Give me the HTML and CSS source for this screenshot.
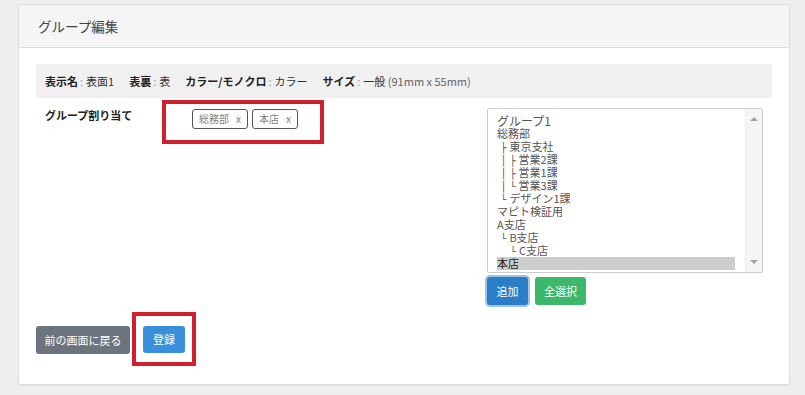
FILE: index.html
```html
<!DOCTYPE html>
<html lang="ja">
<head>
<meta charset="utf-8">
<title>グループ編集</title>
<link rel="stylesheet" href="styles.css">
</head>
<body>
<div class="card">
  <div class="card-header">グループ編集</div>
  <div class="card-body">
    <div class="info">
      <span class="item"><b>表示名</b><span class="sep">:</span>表面1</span>
      <span class="item"><b>表裏</b><span class="sep">:</span>表</span>
      <span class="item"><b>カラー/モノクロ</b><span class="sep">:</span>カラー</span>
      <span class="item"><b>サイズ</b><span class="sep">:</span>一般 <span class="dim">(91mm x 55mm)</span></span>
    </div>
    <div class="assign">
      <div class="label">グループ割り当て</div>
      <div class="mark tags">
        <span class="tag">総務部<span class="x">x</span></span>
        <span class="tag">本店<span class="x">x</span></span>
      </div>
      <div class="picker">
        <div class="listbox">
          <ul class="options">
            <li class="grp">グループ1</li>
            <li>総務部</li>
            <li><span class="bx"> ├ </span>東京支社</li>
            <li><span class="bx"> │ ├ </span>営業2課</li>
            <li><span class="bx"> │ ├ </span>営業1課</li>
            <li><span class="bx"> │ └ </span>営業3課</li>
            <li><span class="bx"> └ </span>デザイン1課</li>
            <li>マピト検証用</li>
            <li>A支店</li>
            <li><span class="bx"> └ </span>B支店</li>
            <li><span class="bx">    └ </span>C支店</li>
            <li class="sel">本店</li>
          </ul>
          <div class="scrollbar">
            <span class="arrow up"></span>
            <span class="arrow down"></span>
          </div>
        </div>
        <div class="pick-actions">
          <button class="btn btn-add">追加</button>
          <button class="btn btn-all">全選択</button>
        </div>
      </div>
    </div>
    <div class="footer">
      <button class="btn btn-back">前の画面に戻る</button>
      <div class="mark submit-wrap">
        <button class="btn btn-submit">登録</button>
      </div>
    </div>
  </div>
</div>
</body>
</html>
```

FILE: styles.css
```css
* { box-sizing: border-box; }
html, body { margin: 0; padding: 0; }
body {
  background: #efefef;
  font-family: "Noto Sans CJK JP", "Open Sans", sans-serif;
  font-size: 11px;
  color: #333;
  width: 805px;
  height: 395px;
  overflow: hidden;
}
.card {
  margin: 4px 0 0 18px;
  width: 772px;
  height: 381px;
  background: #fff;
  border: 1px solid #dedede;
  border-radius: 3px;
  box-shadow: 0 1px 1px rgba(0,0,0,0.06);
}
.card-header {
  height: 43px;
  background: #f5f5f5;
  border-bottom: 1px solid #dcdcdc;
  padding: 0 19px;
  font-size: 13.5px;
  line-height: 43px;
  color: #444;
}
.card-body { padding: 16px 17px 0 17px; }
.info {
  background: #f0f0f0;
  height: 34px;
  padding: 0 9px;
  display: flex;
  align-items: center;
  gap: 15px;
  font-size: 11px;
  line-height: 34px;
}
.info b { font-weight: 700; color: #222; }
.info .sep { color: #999; margin: 0 3px 0 2px; }
.info .dim { color: #666; }
.assign {
  display: flex;
  margin-top: 2px;
  align-items: flex-start;
}
.label {
  width: 126px;
  padding: 7px 0 0 9px;
  font-weight: 700;
  color: #222;
  line-height: 16px;
}
.mark { border: 4px solid #d0202c; }
.tags {
  width: 162px;
  height: 44px;
  padding: 5px 0 0 26px;
  display: flex;
  gap: 4px;
  align-items: flex-start;
}
.tag {
  height: 20px;
  border: 1px solid #555;
  border-radius: 3px;
  padding: 0 6px;
  font-size: 10px;
  line-height: 18px;
  color: #808080;
  display: inline-flex;
  gap: 7px;
}
.picker {
  margin-left: 163px;
  margin-top: 8px;
  width: 276px;
}
.listbox {
  height: 165px;
  border: 1px solid #cccccc;
  border-radius: 2px;
  display: flex;
  padding: 5px 0 5px 9px;
}
.options {
  list-style: none;
  margin: 0;
  padding: 0;
  flex: 1;
  font-size: 11px;
  line-height: 13px;
  color: #555;
}
.options li { white-space: pre; height: 13px; }
.options .bx { font-family: "DejaVu Sans", sans-serif; font-size: 10px; color: #555; }
.options .grp { font-size: 12px; }
.options .sel { background: #cdcdcd; color: #222; }
.scrollbar {
  width: 17px;
  margin: -5px 0 -5px 10px;
  background: #f5f5f5;
  border-left: 1px solid #ececec;
  display: flex;
  flex-direction: column;
  justify-content: space-between;
  align-items: center;
  padding: 8px 0;
}
.arrow {
  width: 0; height: 0;
  border-left: 4px solid transparent;
  border-right: 4px solid transparent;
}
.arrow.up { border-bottom: 4px solid #a3a3a3; }
.arrow.down { border-top: 4px solid #a3a3a3; }
.pick-actions {
  display: flex;
  gap: 7px;
  margin-top: 4px;
}
.btn {
  font-family: inherit;
  font-size: 11px;
  color: #fff;
  border: none;
  border-radius: 3px;
  height: 28px;
  padding: 0;
  line-height: 28px;
  cursor: pointer;
  text-align: center;
}
.btn-add {
  width: 41px;
  background: #2a7dc6;
  box-shadow: 0 0 0 2px #9cc4ec;
}
.btn-all { width: 51px; background: #3cb86d; }
.footer {
  display: flex;
  align-items: flex-start;
  margin-top: 7px;
}
.btn-back {
  margin-top: 14px;
  width: 94px;
  background: #6c757d;
}
.submit-wrap {
  margin-left: 2px;
  padding: 10px 7px 9px 7px;
}
.btn-submit {
  width: 42px;
  height: 27px;
  line-height: 27px;
  background: #3a8fdc;
}
```
